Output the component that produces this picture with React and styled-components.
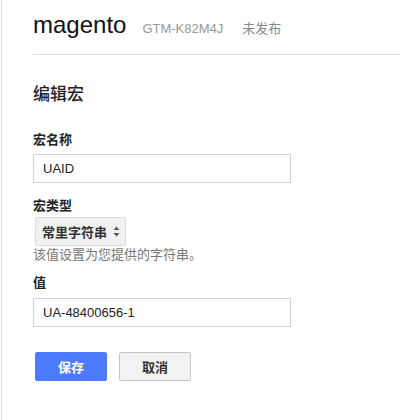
import React from "react";
import styled, { createGlobalStyle } from "styled-components";

const Global = createGlobalStyle`
  html, body { margin: 0; padding: 0; background: #fff; }
  body { font-family: "Liberation Sans", Arial, "Noto Sans CJK SC", sans-serif; color: #222; }
  * { box-sizing: border-box; }
`;

const Page = styled.div`
  margin-left: 1px;
  border-left: 1px solid #dcdcdc;
  min-height: 420px;
  padding-left: 31px;
`;

const Header = styled.div`
  display: flex;
  align-items: baseline;
  padding: 11px 0 15px;
  border-bottom: 1px solid #e2e2e2;
`;

const Brand = styled.span`
  font-size: 24px;
  line-height: 28px;
  color: #111;
`;

const Meta = styled.span`
  font-size: 13px;
  color: ${(p) => p.$color};
  margin-left: ${(p) => p.$gap}px;
  font-family: "Liberation Sans", Arial, "Noto Sans CJK SC", sans-serif;
`;

const Form = styled.div`
  display: flex;
  flex-direction: column;
  align-items: flex-start;
`;

const Title = styled.h2`
  margin: 28px 0 0;
  font-size: 17px;
  line-height: 20px;
  font-weight: 500;
  color: #222;
  font-family: "Noto Sans CJK SC", sans-serif;
`;

const Label = styled.label`
  margin-top: ${(p) => p.$top}px;
  margin-bottom: ${(p) => p.$bottom}px;
  font-size: 13px;
  line-height: 16px;
  font-weight: bold;
  color: #222;
  font-family: "Noto Sans CJK SC", sans-serif;
`;

const Input = styled.input`
  width: 258px;
  height: 29px;
  border: 1px solid #d4d4d4;
  padding: 0 9px;
  font-size: 13px;
  color: #222;
  font-family: "Liberation Sans", Arial, sans-serif;
  outline: none;
  background: #fff;
`;

const Select = styled.div`
  margin-left: 2px;
  width: 91px;
  height: 29px;
  display: flex;
  align-items: center;
  padding-left: 6px;
  gap: 6px;
  background: #f1f1f1;
  border: 1px solid #dcdcdc;
  border-radius: 2px;
  font-size: 13px;
  font-weight: bold;
  color: #333;
  font-family: "Noto Sans CJK SC", sans-serif;
`;

const Help = styled.div`
  font-size: 13px;
  line-height: 16px;
  color: #777;
  font-family: "Noto Sans CJK SC", sans-serif;
`;

const Buttons = styled.div`
  display: flex;
  gap: 12px;
  margin: 25px 0 0 2px;
`;

const Button = styled.button`
  width: 72px;
  height: 29px;
  border-radius: 2px;
  font-size: 13px;
  font-weight: bold;
  font-family: "Noto Sans CJK SC", sans-serif;
  padding: 0;
  cursor: pointer;
  background: ${(p) => (p.$primary ? "#4d7bfe" : "#f2f2f2")};
  color: ${(p) => (p.$primary ? "#fff" : "#333")};
  border: 1px solid ${(p) => (p.$primary ? "#4d7bfe" : "#c6c6c6")};
`;

const Arrows = () => (
  <svg width="7" height="11" viewBox="0 0 7 11">
    <path d="M3.5 0.5 L6.5 4 L0.5 4 Z" fill="#555" />
    <path d="M3.5 10.5 L6.5 7 L0.5 7 Z" fill="#555" />
  </svg>
);

export default function App() {
  return (
    <>
      <Global />
      <Page>
        <Header>
          <Brand>magento</Brand>
          <Meta $color="#999" $gap={16}>GTM-K82M4J</Meta>
          <Meta $color="#888" $gap={19}>未发布</Meta>
        </Header>
        <Form>
          <Title>编辑宏</Title>
          <Label $top={28} $bottom={7}>宏名称</Label>
          <Input defaultValue="UAID" />
          <Label $top={14} $bottom={4}>宏类型</Label>
          <Select>
            常里字符串
            <Arrows />
          </Select>
          <Help>该值设置为您提供的字符串。</Help>
          <Label $top={12} $bottom={8}>值</Label>
          <Input defaultValue="UA-48400656-1" />
          <Buttons>
            <Button $primary>保存</Button>
            <Button>取消</Button>
          </Buttons>
        </Form>
      </Page>
    </>
  );
}
